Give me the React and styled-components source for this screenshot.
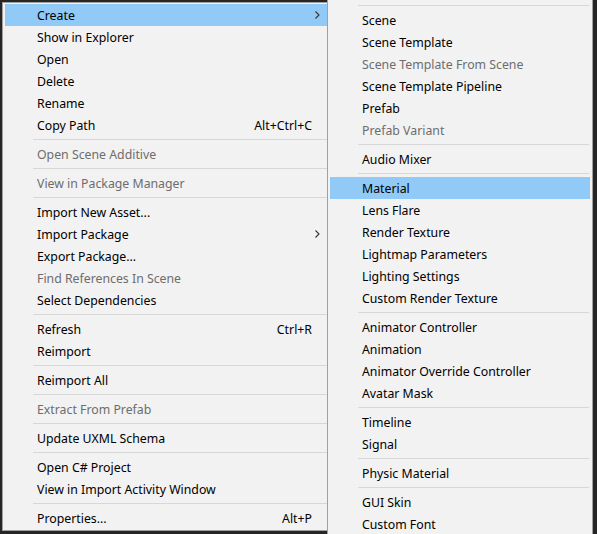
import React from "react";
import styled, { createGlobalStyle } from "styled-components";

const Global = createGlobalStyle`
  html, body { margin: 0; padding: 0; overflow: hidden; background: #262626; }
  * { box-sizing: border-box; }
`;

const Page = styled.div`
  position: relative;
  width: 597px;
  height: 534px;
  overflow: hidden;
  background: #262626;
  font-family: "Noto Sans", "Open Sans", sans-serif;
  font-size: 12.3px;
  color: #000;
`;

const Menu = styled.ul`
  list-style: none;
  margin: 0;
  background: #f2f2f2;
  border: 1px solid #a0a0a0;
  padding: 1px 2px;
  width: ${(p) => p.$width}px;
`;

const ParentMenu = styled(Menu)`
  margin: 2px 0 0 2px;
`;

const SubMenu = styled(Menu)`
  position: absolute;
  left: 327px;
  top: -1px;
  padding-top: 2px;
`;

const Item = styled.li`
  height: 22px;
  display: flex;
  align-items: center;
  padding: 0 9px 0 32px;
  background: ${(p) => (p.$active ? "#91c9f7" : "transparent")};
  color: ${(p) => (p.$disabled ? "#6d6d6d" : "#000")};
  white-space: nowrap;
`;

const Shortcut = styled.span`
  margin-left: auto;
  margin-right: 8px;
`;

const ArrowIcon = styled.svg`
  margin-left: auto;
  flex: none;
`;

const Separator = styled.li`
  height: 1px;
  margin: 3px 1px 3px 28px;
  background: #d7d7d7;
`;

const Arrow = () => (
  <ArrowIcon width="5" height="8" viewBox="0 0 5 8">
    <path d="M0.5 0.5 L4 4 L0.5 7.5" fill="none" stroke="#333" strokeWidth="1.1" />
  </ArrowIcon>
);

const left = [
  { t: "Create", sub: true, active: true },
  { t: "Show in Explorer" },
  { t: "Open" },
  { t: "Delete" },
  { t: "Rename" },
  { t: "Copy Path", k: "Alt+Ctrl+C" },
  "-",
  { t: "Open Scene Additive", d: true },
  "-",
  { t: "View in Package Manager", d: true },
  "-",
  { t: "Import New Asset..." },
  { t: "Import Package", sub: true },
  { t: "Export Package..." },
  { t: "Find References In Scene", d: true },
  { t: "Select Dependencies" },
  "-",
  { t: "Refresh", k: "Ctrl+R" },
  { t: "Reimport" },
  "-",
  { t: "Reimport All" },
  "-",
  { t: "Extract From Prefab", d: true },
  "-",
  { t: "Update UXML Schema" },
  "-",
  { t: "Open C# Project" },
  { t: "View in Import Activity Window" },
  "-",
  { t: "Properties...", k: "Alt+P" },
];

const right = [
  "-",
  { t: "Scene" },
  { t: "Scene Template" },
  { t: "Scene Template From Scene", d: true },
  { t: "Scene Template Pipeline" },
  { t: "Prefab" },
  { t: "Prefab Variant", d: true },
  "-",
  { t: "Audio Mixer" },
  "-",
  { t: "Material", active: true },
  { t: "Lens Flare" },
  { t: "Render Texture" },
  { t: "Lightmap Parameters" },
  { t: "Lighting Settings" },
  { t: "Custom Render Texture" },
  "-",
  { t: "Animator Controller" },
  { t: "Animation" },
  { t: "Animator Override Controller" },
  { t: "Avatar Mask" },
  "-",
  { t: "Timeline" },
  { t: "Signal" },
  "-",
  { t: "Physic Material" },
  "-",
  { t: "GUI Skin" },
  { t: "Custom Font" },
];

const renderItems = (list) =>
  list.map((it, i) =>
    it === "-" ? (
      <Separator key={i} />
    ) : (
      <Item key={i} $active={it.active} $disabled={it.d}>
        <span>{it.t}</span>
        {it.k && <Shortcut>{it.k}</Shortcut>}
        {it.sub && <Arrow />}
      </Item>
    )
  );

export default function App() {
  return (
    <>
      <Global />
      <Page>
        <ParentMenu $width={330}>{renderItems(left)}</ParentMenu>
        <SubMenu $width={266}>{renderItems(right)}</SubMenu>
      </Page>
    </>
  );
}
